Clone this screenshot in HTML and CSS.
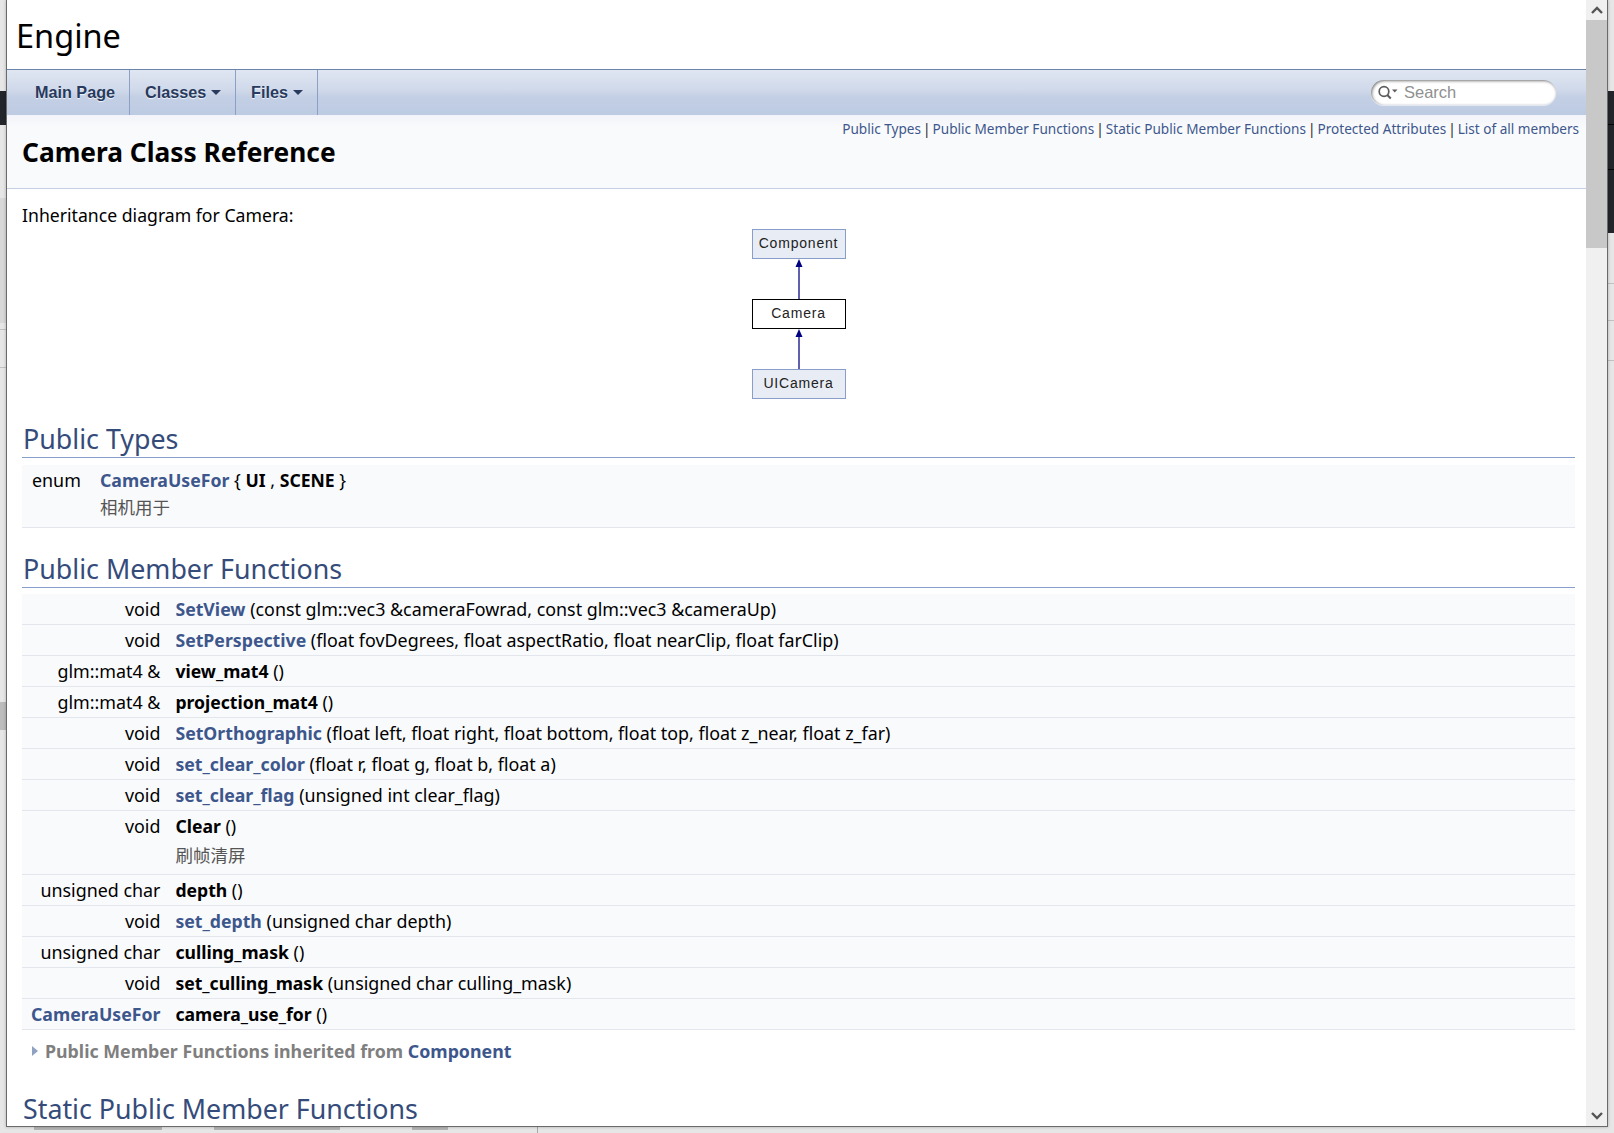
FILE: index.html
```html
<!DOCTYPE html>
<html>
	<head>
		<meta charset="utf-8">
		<meta name="viewport" content="width=device-width">
		<title>Engine: Camera Class Reference</title>
		<link rel="stylesheet" href="styles.css">
	</head>

	<body>
		<div class="desk">
			<i class="desk-band-left"></i>
			<i class="desk-shade-left"></i>
			<i class="desk-block-left"></i>
			<i class="desk-line-left line-a"></i>
			<i class="desk-line-left line-b"></i>
			<i class="desk-band-right"></i>
			<i class="desk-line-right line-c"></i>
			<i class="desk-line-right line-d"></i>
			<i class="desk-line-right line-e"></i>
			<i class="desk-rule"></i>
			<i class="desk-smudge smudge-a"></i>
			<i class="desk-smudge smudge-b"></i>
			<i class="desk-smudge smudge-c"></i>
		</div>

		<div class="window">
			<div class="page">
				<div class="projectname">Engine</div>

				<nav class="navbar">
					<a class="tab tab-main">Main Page</a>
					<a class="tab tab-classes">Classes<b class="caret"></b></a>
					<a class="tab tab-files">Files<b class="caret"></b></a>
					<div class="search">
						<svg class="search-icon" width="20" height="16" viewBox="0 0 20 16">
							<circle cx="6" cy="6.500" r="4.800" fill="none" stroke="#5c5c5c" stroke-width="1.700"/>
							<path d="M9.300 10l3.500 3.500" stroke="#5c5c5c" stroke-width="2"/>
							<path d="M14 4.500h5.500l-2.750 3z" fill="#5c5c5c"/>
						</svg>
						<span class="search-text">Search</span>
					</div>
				</nav>

				<header class="header">
					<div class="summary">
						<a>Public Types</a> <span class="sep">|</span> <a>Public Member Functions</a> <span class="sep">|</span> <a>Static Public Member Functions</a> <span class="sep">|</span> <a>Protected Attributes</a> <span class="sep">|</span> <a>List of all members</a>
					</div>
					<h1 class="headertitle">Camera Class Reference</h1>
				</header>

				<main class="contents">
					<p class="intro">Inheritance diagram for Camera:</p>

					<div class="diagram">
						<div class="node node-other">Component</div>
						<svg class="edge" width="12" height="40" viewBox="0 0 12 40">
							<path d="M6 5v35" stroke="#2b2b94" stroke-width="1.500"/>
							<path d="M6 0l3.500 8h-7z" fill="#000080"/>
						</svg>
						<div class="node node-self">Camera</div>
						<svg class="edge" width="12" height="40" viewBox="0 0 12 40">
							<path d="M6 5v35" stroke="#2b2b94" stroke-width="1.500"/>
							<path d="M6 0l3.500 8h-7z" fill="#000080"/>
						</svg>
						<div class="node node-other">UICamera</div>
					</div>

					<h2 class="groupheader first">Public Types</h2>
					<table class="members members-enum">
						<tr>
							<td class="left">enum</td>
							<td class="right"><a class="el">CameraUseFor</a> { <b>UI</b> , <b>SCENE</b> }</td>
						</tr>
						<tr class="desc">
							<td></td>
							<td class="right">相机用于</td>
						</tr>
					</table>

					<h2 class="groupheader">Public Member Functions</h2>
					<table class="members">
						<tr><td class="left">void</td><td class="right"><a class="el">SetView</a> (const glm::vec3 &amp;cameraFowrad, const glm::vec3 &amp;cameraUp)</td></tr>
						<tr><td class="left">void</td><td class="right"><a class="el">SetPerspective</a> (float fovDegrees, float aspectRatio, float nearClip, float farClip)</td></tr>
						<tr><td class="left">glm::mat4 &amp;</td><td class="right"><b>view_mat4</b> ()</td></tr>
						<tr><td class="left">glm::mat4 &amp;</td><td class="right"><b>projection_mat4</b> ()</td></tr>
						<tr><td class="left">void</td><td class="right"><a class="el">SetOrthographic</a> (float left, float right, float bottom, float top, float z_near, float z_far)</td></tr>
						<tr><td class="left">void</td><td class="right"><a class="el">set_clear_color</a> (float r, float g, float b, float a)</td></tr>
						<tr><td class="left">void</td><td class="right"><a class="el">set_clear_flag</a> (unsigned int clear_flag)</td></tr>
						<tr class="has-desc"><td class="left">void</td><td class="right"><b>Clear</b> ()</td></tr>
						<tr class="desc"><td></td><td class="right">刷帧清屏</td></tr>
						<tr><td class="left">unsigned char</td><td class="right"><b>depth</b> ()</td></tr>
						<tr><td class="left">void</td><td class="right"><a class="el">set_depth</a> (unsigned char depth)</td></tr>
						<tr><td class="left">unsigned char</td><td class="right"><b>culling_mask</b> ()</td></tr>
						<tr><td class="left">void</td><td class="right"><b>set_culling_mask</b> (unsigned char culling_mask)</td></tr>
						<tr><td class="left"><a class="el">CameraUseFor</a></td><td class="right"><b>camera_use_for</b> ()</td></tr>
					</table>

					<div class="inherit">
						<i class="arrow-right"></i>Public Member Functions inherited from <a class="el">Component</a>
					</div>

					<h2 class="groupheader static">Static Public Member Functions</h2>
				</main>
			</div>

			<div class="scrollbar">
				<div class="scroll-btn">
					<svg width="14" height="10" viewBox="0 0 14 10"><path d="M2 8l5-5 5 5" fill="none" stroke="#555" stroke-width="2.400"/></svg>
				</div>
				<div class="scroll-thumb"></div>
				<div class="scroll-rest"></div>
				<div class="scroll-btn">
					<svg width="14" height="10" viewBox="0 0 14 10"><path d="M2 2l5 5 5-5" fill="none" stroke="#555" stroke-width="2.400"/></svg>
				</div>
			</div>
		</div>
	</body>

</html>
```

FILE: styles.css
```css
html, body {
	margin: 0;
	height: 100%;
	overflow: hidden;
}
body {
	background: #e6e6e6;
	font-family: "Noto Sans", "Noto Sans CJK SC", sans-serif;
}

/* what shows around the window */
.desk i {
	position: absolute;
}
.desk-band-left {
	left: 0;
	top: 91px;
	width: 7px;
	height: 34px;
	background: #22252a;
}
.desk-shade-left {
	left: 0;
	top: 198px;
	width: 7px;
	height: 125px;
	background: #d8d8d8;
}
.desk-block-left {
	left: 0;
	top: 702px;
	width: 7px;
	height: 28px;
	background: #bcbcbc;
}
.desk-line-left {
	left: 0;
	width: 7px;
	height: 1px;
	background: #c0c0c0;
}
.line-a {
	top: 329px;
}
.line-b {
	top: 367px;
}
.desk-band-right {
	right: 0;
	top: 91px;
	width: 8px;
	height: 142px;
	background: linear-gradient(#22252a 33px, #050505 33px, #050505 34px, #22252a 34px, #22252a 78px, #050505 78px, #050505 79px, #22252a 79px);
}
.desk-line-right {
	right: 0;
	width: 7px;
	height: 1px;
	background: #c0c0c0;
}
.line-c {
	top: 283px;
}
.line-d {
	top: 320px;
}
.line-e {
	top: 360px;
}
.desk-rule {
	left: 537px;
	top: 1126px;
	width: 1px;
	height: 7px;
	background: #a8a8a8;
}
.desk-smudge {
	top: 1127px;
	height: 3px;
	background: #b4b4b4;
}
.smudge-a {
	left: 34px;
	width: 128px;
}
.smudge-b {
	left: 214px;
	width: 126px;
}
.smudge-c {
	left: 412px;
	width: 36px;
}

.window {
	position: absolute;
	left: 6px;
	top: 0;
	width: 1600px;
	height: 1126px;
	display: flex;
	background: #fff;
	border-left: 1px solid #6a6a6a;
	border-right: 1px solid #6a6a6a;
	border-bottom: 1px solid #6a6a6a;
	box-shadow: 0 0 3px rgba(0, 0, 0, 0.25);
	overflow: hidden;
}
.page {
	flex: 1;
	min-width: 0;
	overflow: hidden;
}

.projectname {
	height: 69px;
	padding-left: 9px;
	font-size: 32.500px;
	line-height: 71px;
	color: #000;
}

/* nav */
.navbar {
	display: flex;
	height: 45px;
	border-top: 1px solid #6884a8;
	background: linear-gradient(#e0e6f2 0, #cfd9ea 45%, #c3cfe5 60%, #bdcbe2 100%);
	font-family: "Liberation Sans", sans-serif;
	font-size: 16.200px;
	font-weight: bold;
	color: #283a5d;
	text-shadow: 0 1px 1px rgba(255, 255, 255, 0.8);
}
.tab {
	display: flex;
	align-items: center;
	border-right: 1px solid #8ba0c4;
}
.tab-main {
	width: 94px;
	padding-left: 28px;
}
.tab-classes {
	width: 90px;
	padding-left: 15px;
}
.tab-files {
	width: 66px;
	padding-left: 15px;
}
.caret {
	display: inline-block;
	margin-left: 5px;
	border-top: 5px solid #283a5d;
	border-left: 5px solid transparent;
	border-right: 5px solid transparent;
}
.search {
	display: flex;
	align-items: center;
	width: 185px;
	height: 25px;
	box-sizing: border-box;
	margin: 10px 30px 0 auto;
	padding-left: 7px;
	background: #fff;
	border-radius: 13px;
	box-shadow: inset 1px 1px 3px #777, 0 1px 1px rgba(255, 255, 255, 0.6);
}
.search-icon {
	flex: none;
}
.search-text {
	margin-left: 6px;
	font-size: 16.500px;
	font-weight: normal;
	color: #909090;
	text-shadow: none;
}

/* header */
.header {
	height: 73px;
	background: linear-gradient(#f2f4f9 0, #f9fafc 12px);
	border-bottom: 1px solid #c4cfe5;
}
.summary {
	padding: 5px 7px 0 0;
	text-align: right;
	font-size: 13.580px;
	line-height: 18px;
	color: #222;
}
.summary a {
	color: #3d578c;
}
.sep {
	margin: 0 -1.500px;
}
.headertitle {
	margin: 0;
	padding: 0 0 0 15px;
	font-size: 26.300px;
	line-height: 28px;
	font-weight: bold;
	color: #000;
}

/* contents */
.contents {
	padding: 0 11px 0 15px;
	font-size: 17.880px;
	color: #000;
}
.intro {
	margin: 0;
	padding-top: 13px;
	font-size: 17.650px;
	line-height: 26px;
}
.diagram {
	display: flex;
	flex-direction: column;
	align-items: center;
	padding-top: 1px;
}
.node {
	width: 92px;
	height: 28px;
	border: 1px solid #8a9cc8;
	text-align: center;
	font-family: "Liberation Sans", sans-serif;
	font-size: 14px;
	letter-spacing: 0.800px;
	line-height: 26px;
	color: #222;
}
.node-other {
	background: #e8edf5;
}
.node-self {
	background: #fff;
	border-color: #000;
}
.edge {
	display: block;
}
.groupheader {
	margin: 0;
	height: 43px;
	padding: 0 0 0 1px;
	border-bottom: 1px solid #879ecb;
	font-size: 26.800px;
	line-height: 49px;
	font-weight: normal;
	color: #354c7b;
}
.groupheader.first {
	margin-top: 15px;
}
.members {
	width: 100%;
	margin-top: 6px;
	border-collapse: collapse;
}
.members-enum {
	margin-top: 7px;
	margin-bottom: 16px;
}
.members td {
	height: 30px;
	padding: 0;
	background: #f9fafc;
	border-bottom: 1px solid #e3e6ec;
	line-height: 24px;
	vertical-align: middle;
	white-space: nowrap;
}
.members b {
	font-size: 17.600px;
	font-weight: bold;
}
.el {
	color: #3d578c;
	font-size: 17.700px;
	font-weight: bold;
}
.members .left {
	width: 128px;
	padding-left: 9px;
	text-align: right;
}
.members .right {
	padding-left: 15px;
}
.members-enum .left {
	width: 60px;
	padding-left: 10px;
	text-align: left;
}
.members-enum .right {
	padding-left: 8px;
}
.members-enum td {
	border-bottom: none;
}
.members .has-desc td {
	border-bottom: none;
}
.members .desc td {
	height: 34px;
	padding-top: 2px;
	box-sizing: border-box;
	border-bottom: 1px solid #e3e6ec;
	vertical-align: top;
	font-size: 17.500px;
	color: #555;
}
.members-enum .desc td {
	height: 32px;
	padding-top: 0;
}
.inherit {
	display: flex;
	align-items: center;
	box-sizing: border-box;
	height: 43px;
	padding: 0 0 1px 10px;
	font-size: 17.800px;
	font-weight: bold;
	color: #7f7f7f;
	white-space: pre;
}
.inherit .el {
	font-size: inherit;
}
.arrow-right {
	margin-right: 7px;
	border-left: 6px solid #8fa2c2;
	border-top: 5px solid transparent;
	border-bottom: 5px solid transparent;
}
.groupheader.static {
	margin-top: 11px;
}

/* scrollbar */
.scrollbar {
	display: flex;
	flex: none;
	flex-direction: column;
	width: 21px;
	background: #f0f0f0;
}
.scroll-btn {
	display: flex;
	flex: none;
	align-items: center;
	justify-content: center;
	height: 20px;
}
.scroll-thumb {
	flex: none;
	height: 228px;
	background: #c8c8c8;
}
.scroll-rest {
	flex: 1;
}
```
